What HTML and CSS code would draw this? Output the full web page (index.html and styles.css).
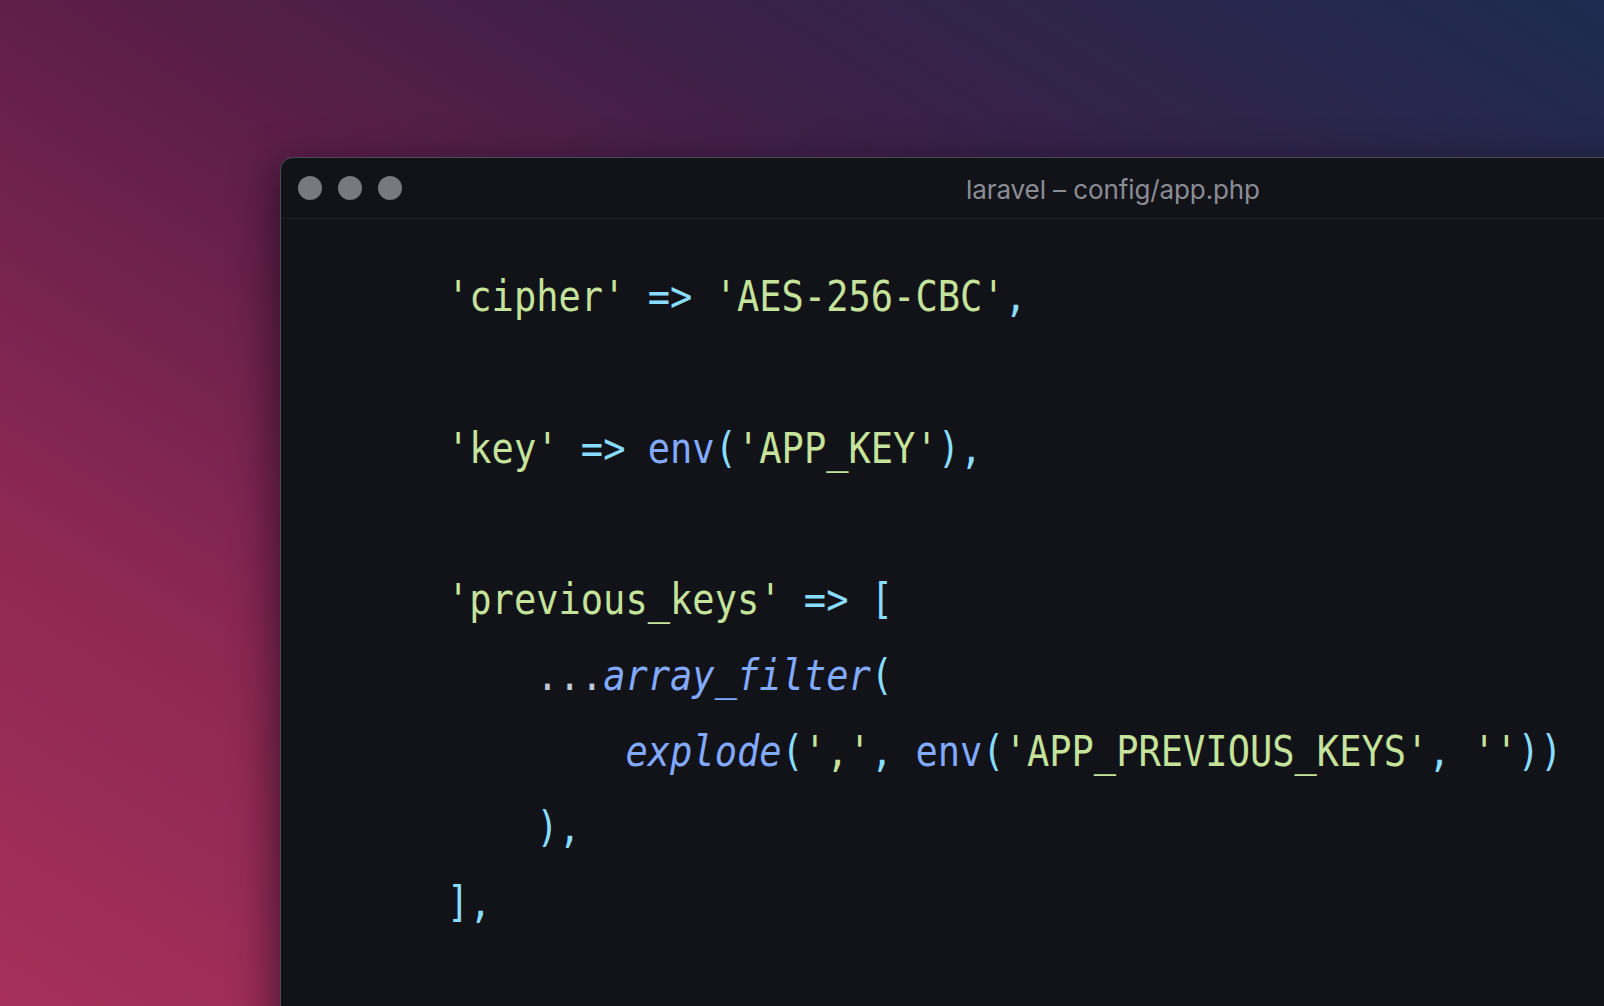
FILE: index.html
```html
<!DOCTYPE html>
<html lang="en">
<head>
<meta charset="utf-8">
<title>laravel – config/app.php</title>
<link rel="stylesheet" href="styles.css">
</head>
<body>
<div class="stage">
  <div class="window">
    <div class="titlebar">
      <div class="lights"><span class="dot"></span><span class="dot"></span><span class="dot"></span></div>
      <div class="title">laravel – config/app.php</div>
      <div class="spacer"></div>
    </div>
    <div class="editor">
<pre class="code"><span class="s">'cipher'</span> <span class="p">=&gt;</span> <span class="s">'AES-256-CBC'</span><span class="p">,</span>

<span class="s">'key'</span> <span class="p">=&gt;</span> <span class="f">env</span><span class="p">(</span><span class="s">'APP_KEY'</span><span class="p">),</span>

<span class="s">'previous_keys'</span> <span class="p">=&gt;</span> <span class="p">[</span>
    <span class="o">...</span><span class="f i">array_filter</span><span class="p">(</span>
        <span class="f i">explode</span><span class="p">(</span><span class="s">','</span><span class="p">,</span> <span class="f">env</span><span class="p">(</span><span class="s">'APP_PREVIOUS_KEYS'</span><span class="p">,</span> <span class="s">''</span><span class="p">))</span>
    <span class="p">),</span>
<span class="p">],</span></pre>
    </div>
  </div>
</div>
</body>
</html>
```

FILE: styles.css
```css
html, body {
  margin: 0;
  padding: 0;
  height: 100%;
  overflow: hidden;
}

body {
  background: linear-gradient(to top right, #a6305a 0%, #8c2853 25%, #5c1e48 52%, #3c2048 70%, #1c2c50 100%);
}

.stage {
  padding: 157px 0 0 280px;
}

.window {
  width: 1666px;
  height: 1000px;
  background: #121319;
  border: 1px solid #4c4d54;
  border-radius: 13px;
  box-shadow: -6px 10px 40px rgba(10, 5, 20, 0.55);
  overflow: hidden;
  box-sizing: border-box;
}

.titlebar {
  height: 61px;
  display: grid;
  grid-template-columns: 1fr auto 1fr;
  align-items: center;
  border-bottom: 1px solid #1f2027;
  padding: 0 17px;
  box-sizing: border-box;
}

.lights {
  display: flex;
  gap: 16px;
}

.dot {
  width: 24px;
  height: 24px;
  border-radius: 50%;
  background: #78797e;
}

.title {
  font-family: Inter, "Noto Sans", sans-serif;
  font-size: 26px;
  color: #8b8d94;
  letter-spacing: -0.1px;
  margin-top: 2px;
}

.editor {
  padding: 40px 0 0 166px;
}

.code {
  margin: 0;
  font-family: "DejaVu Sans Mono", "Liberation Mono", monospace;
  font-size: 42px;
  line-height: 75.8px;
  color: #bfc7d5;
  transform: scaleX(0.882);
  transform-origin: left top;
  white-space: pre;
}

.s { color: #c6e39c; }
.p { color: #89ddff; }
.f { color: #82aaff; }
.i { font-style: italic; }
.o { color: #bfc7d5; }
```
